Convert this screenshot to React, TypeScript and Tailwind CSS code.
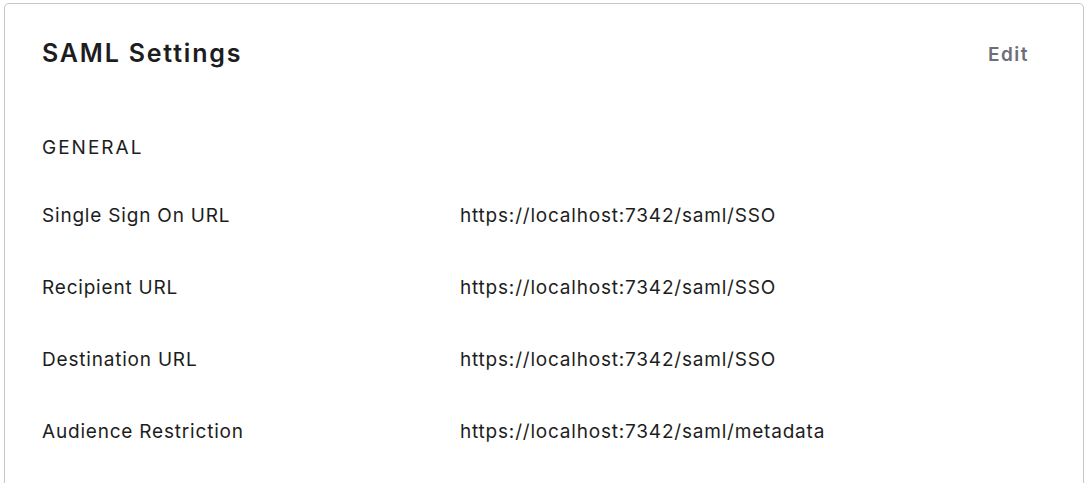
import React from "react";

const rows = [
  { label: "Single Sign On URL", value: "https://localhost:7342/saml/SSO" },
  { label: "Recipient URL", value: "https://localhost:7342/saml/SSO" },
  { label: "Destination URL", value: "https://localhost:7342/saml/SSO" },
  { label: "Audience Restriction", value: "https://localhost:7342/saml/metadata" },
];

export default function App() {
  return (
    <div className="h-[483px] bg-white pl-[4px] pr-[4px] pt-[3px] font-['Inter',sans-serif] text-[#1d1d21] overflow-hidden">
      <div className="h-[520px] rounded-t-[5px] border border-[#c6c6c6] bg-white pl-[37px] pr-[54px] pt-[33px]">
        <div className="flex items-center justify-between">
          <h2 className="text-[25px] leading-[32px] font-semibold tracking-[1.8px]">SAML Settings</h2>
          <button className="text-[19px] leading-[28px] font-semibold tracking-[1.5px] text-[#6e6e78] mt-[4px]">Edit</button>
        </div>
        <div className="mt-[65px] text-[19px] leading-[28px] tracking-[2px]">GENERAL</div>
        <div className="mt-[40px] flex flex-col gap-[44px]">
          {rows.map((r) => (
            <div key={r.label} className="flex text-[19px] leading-[28px] tracking-[0.8px]">
              <div className="w-[418px] shrink-0">{r.label}</div>
              <div>{r.value}</div>
            </div>
          ))}
        </div>
      </div>
    </div>
  );
}
